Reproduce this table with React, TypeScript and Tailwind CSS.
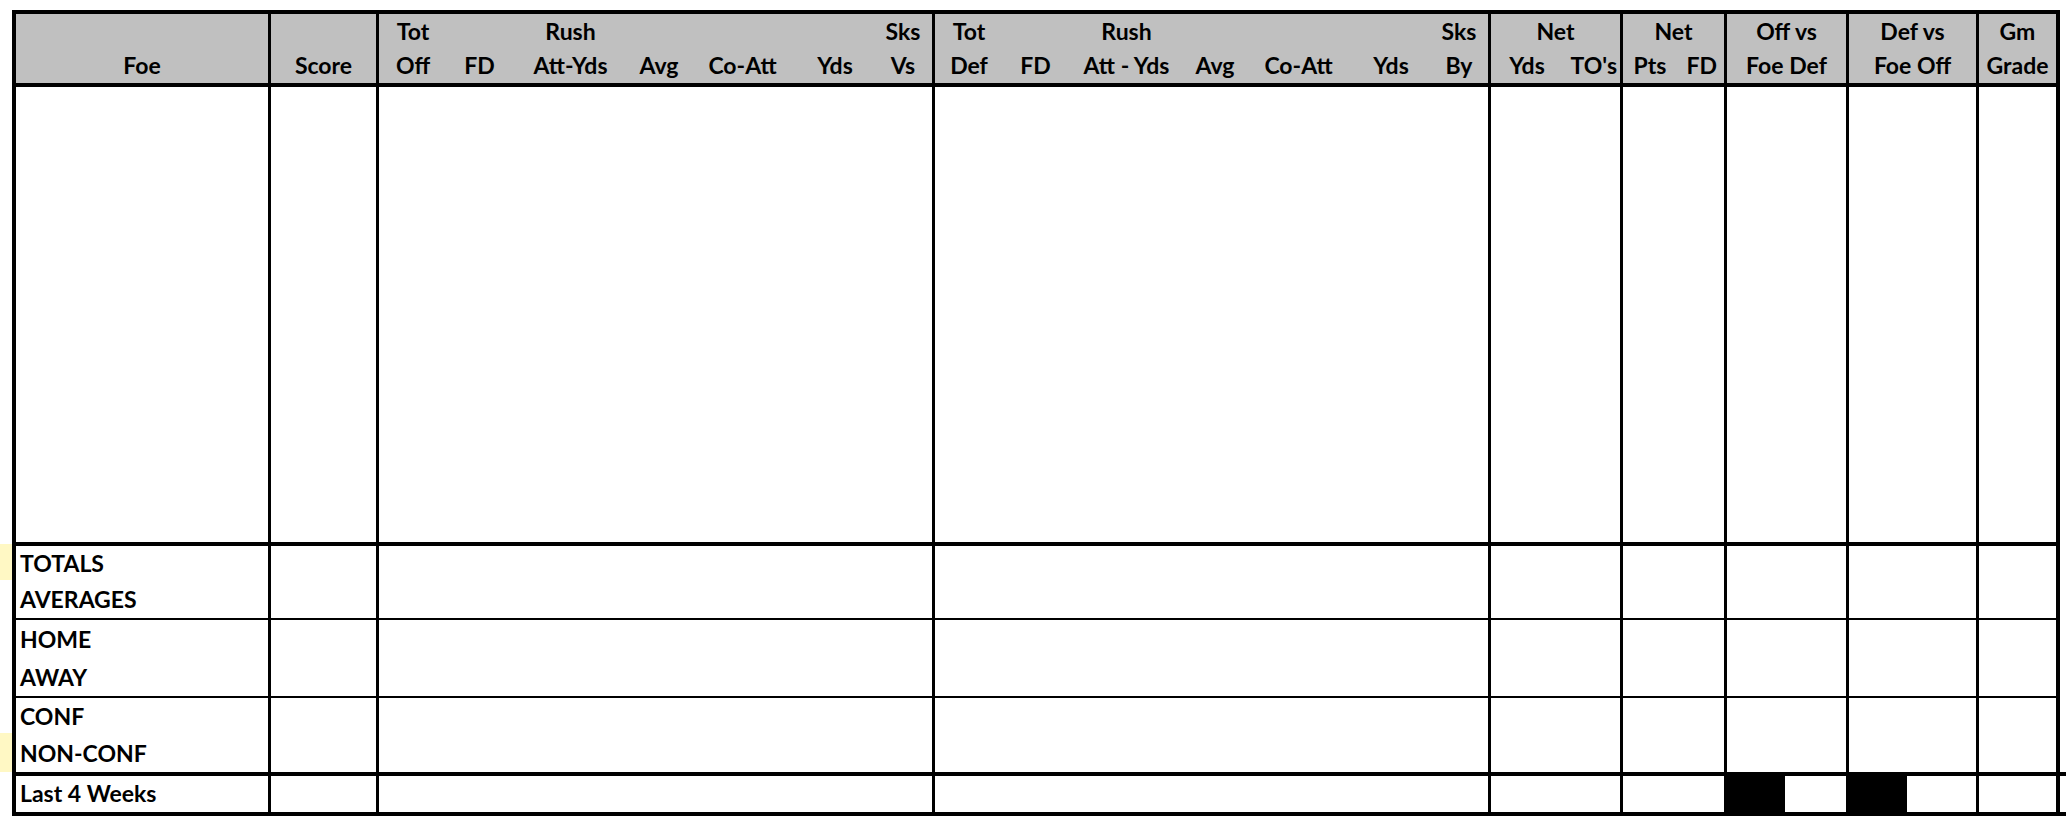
const COLS =
  'grid grid-cols-[252px_105px_553px_553px_129px_101px_119px_127px_77px] gap-x-[3px]';
const SUB = 'grid grid-cols-[68px_65px_117px_60px_107px_78px_58px]';

function Line({ children, className = '' }: { children?: React.ReactNode; className?: string }) {
  return <div className={`flex items-end pb-[6px] leading-none ${className}`}>{children}</div>;
}

function HeadCell({ top, bottom }: { top?: string; bottom?: string }) {
  return (
    <div className="flex flex-col bg-[#c0c0c0]">
      <Line className="h-[35px] justify-center">{top}</Line>
      <Line className="h-[34px] justify-center">{bottom}</Line>
    </div>
  );
}

function GroupHead({ top, bottom }: { top: string[]; bottom: string[] }) {
  return (
    <div className="flex flex-col bg-[#c0c0c0]">
      <div className={`${SUB} h-[35px]`}>
        {top.map((t, i) => (
          <Line key={i} className="justify-center">{t}</Line>
        ))}
      </div>
      <div className={`${SUB} h-[34px]`}>
        {bottom.map((t, i) => (
          <Line key={i} className="justify-center whitespace-nowrap">{t}</Line>
        ))}
      </div>
    </div>
  );
}

function Blank({ black }: { black?: boolean }) {
  return (
    <div className="flex bg-white">
      {black && <div className="w-[58px] bg-black" />}
    </div>
  );
}

function Band({ labels, h, black }: { labels: string[]; h: string; black?: boolean }) {
  return (
    <div className={`${COLS} ${h}`}>
      <div className="flex flex-col bg-white">
        {labels.map((l) => (
          <div key={l} className="flex flex-1 items-end pb-[7px] pl-[4px] leading-none">
            {l}
          </div>
        ))}
      </div>
      <Blank />
      <Blank />
      <Blank />
      <Blank />
      <Blank />
      <Blank black={black} />
      <Blank black={black} />
      <Blank />
    </div>
  );
}

export default function App() {
  return (
    <div className="min-h-screen bg-white font-['Lato','Liberation_Sans',sans-serif] text-[23px] font-bold text-black">
      <div className="flex pt-[10px]">
        {/* little yellow marks left of the sheet */}
        <div className="flex w-[12px] flex-col">
          <div className="h-[534px]" />
          <div className="h-[36px] bg-[#fff8c4]" />
          <div className="h-[153px]" />
          <div className="h-[39px] bg-[#fff8c4]" />
        </div>

        <div className="relative flex w-[2048px] flex-col border-4 border-black bg-black">
          <div className={`${COLS} h-[69px]`}>
            <HeadCell bottom="Foe" />
            <HeadCell bottom="Score" />
            <GroupHead
              top={['Tot', '', 'Rush', '', '', '', 'Sks']}
              bottom={['Off', 'FD', 'Att-Yds', 'Avg', 'Co-Att', 'Yds', 'Vs']}
            />
            <GroupHead
              top={['Tot', '', 'Rush', '', '', '', 'Sks']}
              bottom={['Def', 'FD', 'Att - Yds', 'Avg', 'Co-Att', 'Yds', 'By']}
            />
            <div className="flex flex-col bg-[#c0c0c0]">
              <Line className="h-[35px] justify-center">Net</Line>
              <div className="grid h-[34px] grid-cols-[72px_57px]">
                <Line className="justify-center">Yds</Line>
                <Line className="justify-end pr-[3px]">TO's</Line>
              </div>
            </div>
            <div className="flex flex-col bg-[#c0c0c0]">
              <Line className="h-[35px] justify-center">Net</Line>
              <div className="grid h-[34px] grid-cols-[54px_47px]">
                <Line className="justify-center">Pts</Line>
                <Line className="justify-end pr-[7px]">FD</Line>
              </div>
            </div>
            <HeadCell top="Off vs" bottom="Foe Def" />
            <HeadCell top="Def vs" bottom="Foe Off" />
            <HeadCell top="Gm" bottom="Grade" />
          </div>

          <div className={`${COLS} mt-[4px] h-[455px]`}>
            <Blank />
            <Blank />
            <Blank />
            <Blank />
            <Blank />
            <Blank />
            <Blank />
            <Blank />
            <Blank />
          </div>

          <div className="mt-[4px]">
            <Band labels={['TOTALS', 'AVERAGES']} h="h-[72px]" />
          </div>
          <div className="mt-[2px]">
            <Band labels={['HOME', 'AWAY']} h="h-[76px]" />
          </div>
          <div className="mt-[2px]">
            <Band labels={['CONF', 'NON-CONF']} h="h-[74px]" />
          </div>
          <div className="mt-[4px]">
            <Band labels={['Last 4 Weeks']} h="h-[36px]" black />
          </div>

          {/* border stubs poking out past the right edge */}
          <div className="absolute right-[-10px] top-[758px] h-[4px] w-[6px] bg-black" />
          <div className="absolute right-[-10px] bottom-[-4px] h-[4px] w-[6px] bg-black" />
        </div>
      </div>
    </div>
  );
}
